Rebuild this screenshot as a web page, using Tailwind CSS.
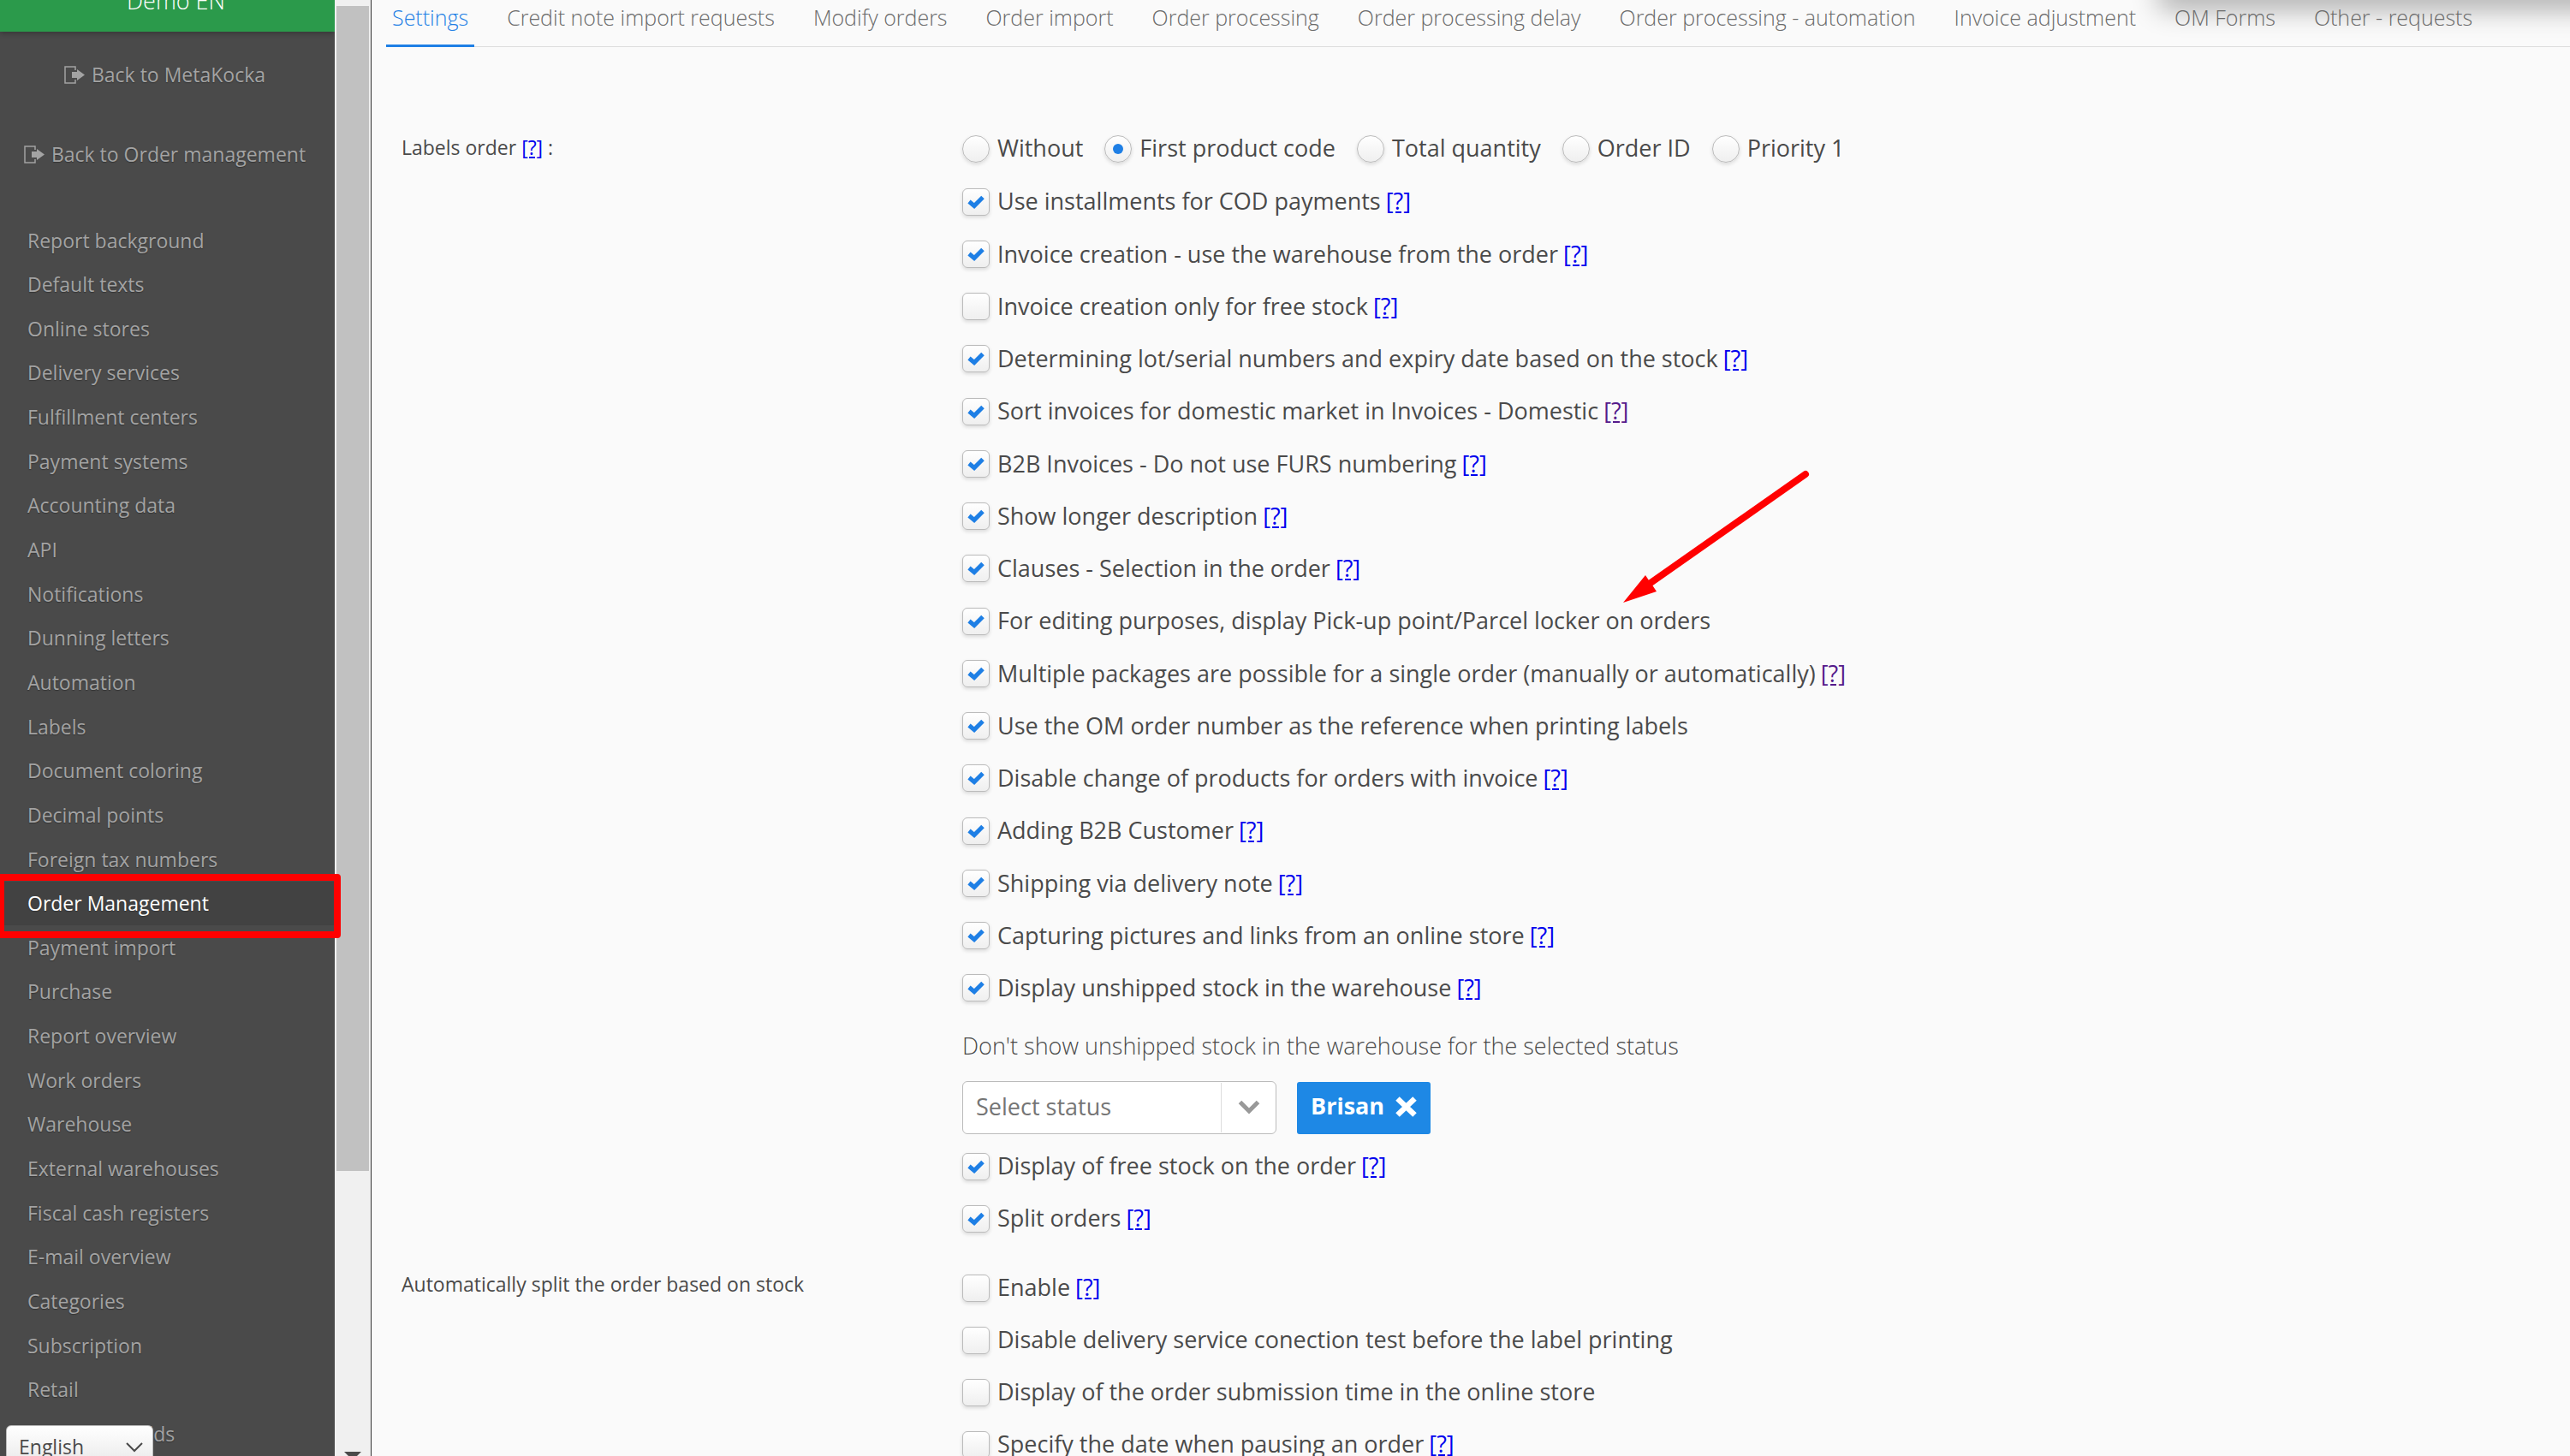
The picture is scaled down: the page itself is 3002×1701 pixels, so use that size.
<!DOCTYPE html>
<html lang="en">
<head>
    <meta charset="UTF-8">
    <meta name="viewport" content="width=device-width, initial-scale=1.0">
    <title>Order Management - Settings</title>
    <script src="https://cdn.jsdelivr.net/npm/@tailwindcss/browser@4"></script>
</head>
<body class="flex h-screen overflow-hidden bg-[#fafafa] font-['Open_Sans',sans-serif] text-[23px] text-[#4a4a4a]">

    <!-- Sidebar -->
    <aside class="relative flex h-full w-[434px] shrink-0 border-r border-[#333] bg-[#f0f0f0]">
        <div class="h-full w-[391px] overflow-hidden bg-[#4a4a4a] text-[#a3a3a3] text-shadow-[0_1px_1px_#333]">
            <header class="flex h-[37px] flex-col justify-end bg-[#2b9a4b] pb-[18px] pl-[20px] text-center text-[27px] leading-[36px] font-light text-white shadow-[0_2px_6px_#0004] text-shadow-none">Demo EN</header>
            <div class="flex flex-col pt-[28px] pr-[6px]">
                <a href="#" class="flex h-[44px] items-center justify-center gap-2">
                    <svg class="h-[21px] w-[24px]" viewBox="0 0 24 21" fill="none"><path d="M13 5V1H1v19h12v-4" stroke="currentColor" stroke-width="1.5"/><path d="M9 7h6V4l9 6.500-9 6.500v-3H9z" fill="currentColor"/></svg>
                    Back to MetaKocka
                </a>
                <a href="#" class="mt-[49px] flex h-[44px] items-center justify-center gap-2">
                    <svg class="h-[21px] w-[24px]" viewBox="0 0 24 21" fill="none"><path d="M13 5V1H1v19h12v-4" stroke="currentColor" stroke-width="1.5"/><path d="M9 7h6V4l9 6.500-9 6.500v-3H9z" fill="currentColor"/></svg>
                    Back to Order management
                </a>
            </div>
            <nav id="side-menu" class="mt-[53px] grid min-h-[1446px] auto-rows-fr"></nav>
        </div>

        <!-- Scrollbar -->
        <div class="flex flex-1 flex-col items-center justify-between pt-[7px]">
            <div class="h-[1361px] w-[38px] bg-[#c1c1c1]"></div>
            <svg class="h-[5px] w-[20px]" viewBox="0 0 20 5"><path d="M0 0h20l-5 5H5z" fill="#4a4a4a"/></svg>
        </div>

        <div class="absolute top-[1021px] -left-[3px] h-[75px] w-[401px] rounded-[4px] border-8 border-[#f00]"></div>

        <div class="absolute top-[1665px] left-[7px] w-[172px]">
            <select aria-label="Language" class="h-[51px] w-full appearance-none rounded-[6px] border border-[#bbb] bg-linear-to-b from-white to-[#e8e8e8] pl-[14px] text-[23px] text-[#4a4a4a]">
                <option>English</option>
            </select>
            <svg class="pointer-events-none absolute top-[20px] right-[12px] h-[12px] w-[20px]" viewBox="0 0 20 12" fill="none"><path d="M1 1l9 9 9-9" stroke="#4a4a4a" stroke-width="2"/></svg>
        </div>
    </aside>

    <main class="relative min-w-0 flex-1 overflow-hidden">
        <div class="absolute -top-[20px] -right-[40px] left-[2094px] h-[20px] shadow-[0_4px_32px_6px_#0005]"></div>

        <nav id="tabs" class="ml-[17px] flex h-[55px] gap-[31px] border-b border-[#ddd] text-[25px] font-light whitespace-nowrap text-[#6a6a6a]"></nav>

        <section class="flex pt-[87px] pl-[35px]">
            <div class="w-[655px] shrink-0 pt-[14px] leading-[32px]">Labels order <a href="#" class="text-[#0000ee] underline">[?]</a> :</div>
            <div class="flex-1 text-[27px]">
                <div id="label-order" class="flex h-[63px] items-center gap-[25px]"></div>
                <div id="options-main" class="grid min-h-[980px] auto-rows-fr"></div>
                <p class="pt-[17px] pb-[20px] leading-[40px] font-light">Don't show unshipped stock in the warehouse for the selected status</p>
                <div class="mb-[7px] flex items-center gap-[24px]">
                    <div class="relative h-[62px] w-[367px]">
                        <select aria-label="Status" class="h-full w-full appearance-none rounded-[6px] border border-[#bbb] bg-white pl-[15px] text-[#757575]">
                            <option>Select status</option>
                        </select>
                        <span class="pointer-events-none absolute inset-y-[2px] right-[1px] flex w-[64px] items-center justify-center border-l border-[#ddd]">
                            <svg class="h-[17px] w-[26px]" viewBox="0 0 26 17" fill="none"><path d="M2.500 2.500L13 13 23.500 2.500" stroke="#999" stroke-width="5"/></svg>
                        </span>
                    </div>
                    <button class="mt-[2px] flex h-[61px] items-center gap-[13px] rounded-[3px] bg-[#1e88e5] px-[16px] pb-[4px] font-bold text-white">
                        Brisan
                        <svg class="h-[24px] w-[25px]" viewBox="0 0 25 24"><path d="M2.500 2.500l20 19m0-19l-20 19" stroke="#fff" stroke-width="6.500"/></svg>
                    </button>
                </div>
                <div id="options-stock" class="grid min-h-[122px] auto-rows-fr"></div>
            </div>
        </section>

        <section class="flex pt-[20px] pl-[35px]">
            <div class="w-[655px] shrink-0 pt-[10px] leading-[32px]">Automatically split the order based on stock</div>
            <div id="options-split" class="grid min-h-[244px] flex-1 auto-rows-fr text-[27px]"></div>
        </section>

        <svg class="absolute top-[548px] left-[1460px] h-[160px] w-[224px]" viewBox="0 0 224 160" fill="none">
            <path d="M215 6L34 133" stroke="#f00" stroke-width="8" stroke-linecap="round"/>
            <path d="M2 156L28 124l4 6 5 7 4 6z" fill="#f00"/>
        </svg>
    </main>

    <script>
        const menu = ['Report background', 'Default texts', 'Online stores', 'Delivery services', 'Fulfillment centers',
            'Payment systems', 'Accounting data', 'API', 'Notifications', 'Dunning letters', 'Automation', 'Labels',
            'Document coloring', 'Decimal points', 'Foreign tax numbers', 'Order Management', 'Payment import', 'Purchase',
            'Report overview', 'Work orders', 'Warehouse', 'External warehouses', 'Fiscal cash registers',
            'E-mail overview', 'Categories', 'Subscription', 'Retail', 'Additional fields'];

        document.getElementById('side-menu').innerHTML = menu.map(item => {
            const state = item === 'Order Management' ? 'bg-[#424242] text-white' : 'hover:text-white';
            return `<a href="#" class="flex items-center pl-[32px] ${state}">${item}</a>`;
        }).join('');

        const tabs = ['Settings', 'Credit note import requests', 'Modify orders', 'Order import', 'Order processing',
            'Order processing delay', 'Order processing - automation', 'Invoice adjustment', 'OM Forms', 'Other - requests'];

        document.getElementById('tabs').innerHTML = tabs.map((tab, i) => {
            const state = i === 0 ? 'border-[#1e7fe5] text-[#1e7fe5]' : 'border-transparent';
            return `<a href="#" class="z-10 h-[55px] border-b-[3px] px-[7px] pt-[3px] leading-[34px] ${state}">${tab}</a>`;
        }).join('');

        const radios = ['Without', 'First product code', 'Total quantity', 'Order ID', 'Priority 1'];

        document.getElementById('label-order').innerHTML = radios.map((name, i) => `
            <label class="flex items-center gap-[9px]">
                <span class="relative flex size-[32px] items-center justify-center">
                    <input type="radio" name="label-order" ${i === 1 ? 'checked' : ''} class="peer size-full appearance-none rounded-full border border-[#bbb] bg-linear-to-b from-white to-[#efefef] shadow-[0_2px_4px_#0002]">
                    <span class="absolute hidden size-[12px] rounded-full bg-[#1e7fe5] peer-checked:block"></span>
                </span>
                ${name}
            </label>`).join('');

        // help: 1 = link, 2 = already visited link
        const options = {
            'options-main': [
                ['Use installments for COD payments', true, 1],
                ['Invoice creation - use the warehouse from the order', true, 1],
                ['Invoice creation only for free stock', false, 1],
                ['Determining lot/serial numbers and expiry date based on the stock', true, 1],
                ['Sort invoices for domestic market in Invoices - Domestic', true, 2],
                ['B2B Invoices - Do not use FURS numbering', true, 1],
                ['Show longer description', true, 1],
                ['Clauses - Selection in the order', true, 1],
                ['For editing purposes, display Pick-up point/Parcel locker on orders', true, 0],
                ['Multiple packages are possible for a single order (manually or automatically)', true, 2],
                ['Use the OM order number as the reference when printing labels', true, 0],
                ['Disable change of products for orders with invoice', true, 1],
                ['Adding B2B Customer', true, 1],
                ['Shipping via delivery note', true, 1],
                ['Capturing pictures and links from an online store', true, 1],
                ['Display unshipped stock in the warehouse', true, 1]
            ],
            'options-stock': [
                ['Display of free stock on the order', true, 1],
                ['Split orders', true, 1]
            ],
            'options-split': [
                ['Enable', false, 1],
                ['Disable delivery service conection test before the label printing', false, 0],
                ['Display of the order submission time in the online store', false, 0],
                ['Specify the date when pausing an order', false, 1]
            ]
        };

        const help = ['', '<a href="#" class="text-[#0000ee] underline">[?]</a>', '<a href="#" class="text-[#551a8b] underline">[?]</a>'];

        for (const id in options) {
            document.getElementById(id).innerHTML = options[id].map(([name, checked, link]) => `
                <div class="flex items-center gap-[6px]">
                    <label class="flex items-center gap-[9px]">
                        <span class="relative flex size-[32px] items-center justify-center">
                            <input type="checkbox" ${checked ? 'checked' : ''} class="peer size-full appearance-none rounded-[6px] border border-[#bbb] bg-linear-to-b from-white to-[#efefef] shadow-[0_2px_4px_#0002]">
                            <svg class="pointer-events-none absolute hidden h-[16px] w-[20px] peer-checked:block" viewBox="0 0 20 16" fill="none"><path d="M2 7.500l6 5L18 2.500" stroke="#1e7fe5" stroke-width="5"/></svg>
                        </span>
                        ${name}
                    </label>
                    ${help[link]}
                </div>`).join('');
        }
    </script>
</body>
</html>
